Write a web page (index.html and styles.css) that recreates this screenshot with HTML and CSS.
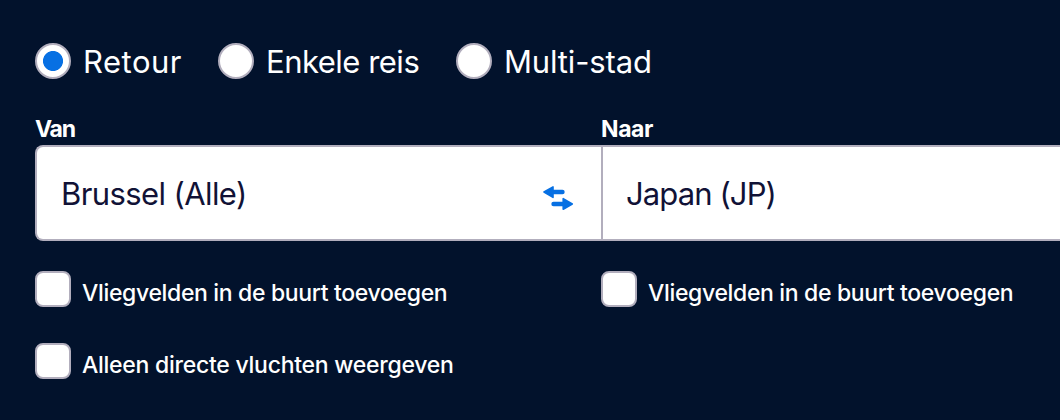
FILE: index.html
```html
<!DOCTYPE html>
<html lang="nl">
<head>
  <meta charset="UTF-8">
  <title>Vluchten zoeken</title>
  <meta name="viewport" content="width=device-width, initial-scale=1.0">
  <link rel="stylesheet" href="styles.css">
</head>
<body>

<form class="search">

  <!-- REISTYPE -->
  <div class="trip-types">
    <label class="trip trip-return"><input type="radio" name="trip" checked><span>Retour</span></label>
    <label class="trip trip-single"><input type="radio" name="trip"><span>Enkele reis</span></label>
    <label class="trip trip-multi"><input type="radio" name="trip"><span>Multi-stad</span></label>
  </div>

  <!-- VAN / NAAR -->
  <div class="columns labels">
    <span class="label-from">Van</span>
    <span class="label-to">Naar</span>
  </div>
  <div class="columns fields">
    <div class="field">
      <span class="value-from">Brussel (Alle)</span>
      <svg class="swap" width="32" height="26" viewBox="0 0 32 26">
        <path d="M1 8 10 2.9V13.4Z"/>
        <path d="M8 8H19.5"/>
        <path d="M29.3 20 20.2 14.7V25.2Z"/>
        <path d="M22 20H10.5"/>
      </svg>
    </div>
    <div class="field">
      <span class="value-to">Japan (JP)</span>
    </div>
  </div>

  <!-- OPTIES -->
  <div class="columns options">
    <label class="option nearby"><input type="checkbox"><span>Vliegvelden in de buurt toevoegen</span></label>
    <label class="option nearby"><input type="checkbox"><span>Vliegvelden in de buurt toevoegen</span></label>
    <label class="option direct"><input type="checkbox"><span>Alleen directe vluchten weergeven</span></label>
  </div>

</form>

</body>
</html>
```

FILE: styles.css
```css
* {
  box-sizing: border-box;
}

body {
  margin: 0;
  height: 420px;
  background-color: #02122c;
  color: #fff;
  font-family: Inter, "Liberation Sans", sans-serif;
}

.search {
  padding: 43px 0 0 35px;
}

.columns {
  display: grid;
  grid-template-columns: 566px 1fr;
}

input {
  appearance: none;
  flex: none;
  width: 36px;
  height: 36px;
  margin: 0;
  background-color: #fff;
  border: 2px solid #b2aebd;
}

/* REISTYPE */
.trip-types {
  display: flex;
}

.trip {
  display: flex;
  align-items: center;
  gap: 12px;
  height: 36px;
  font-size: 31px;
  white-space: nowrap;
}

.trip-return {
  width: 183px;
  letter-spacing: 0.5px;
}

.trip-single {
  width: 238px;
  letter-spacing: -0.5px;
}

.trip-multi {
  letter-spacing: -0.15px;
}

.trip input {
  border-radius: 50%;
}

.trip input:checked {
  background: radial-gradient(circle, #0770e3 9.6px, #fff 10.4px);
}

/* VELDEN */
.labels {
  margin-top: 36px;
  height: 30px;
  line-height: 28px;
  font-size: 23px;
  font-weight: 700;
}

.label-from {
  letter-spacing: -1.2px;
}

.label-to {
  letter-spacing: -0.4px;
}

.fields {
  height: 96px;
  background-color: #fff;
  border: 2px solid #b2aebd;
  border-right: none;
  border-radius: 8px 0 0 8px;
}

.field {
  display: flex;
  align-items: center;
  justify-content: space-between;
  padding: 0 28px 0 24px;
  font-size: 31px;
  color: #111236;
}

.field + .field {
  border-left: 2px solid #b2aebd;
  margin-left: -2px;
  padding-left: 23px;
}

.value-from {
  letter-spacing: -0.6px;
}

.value-to {
  letter-spacing: -0.9px;
}

.swap {
  margin-top: 8px;
  fill: #0770e3;
  stroke: #0770e3;
  stroke-width: 1.6;
  stroke-linejoin: round;
  stroke-linecap: round;
}

.swap path:nth-child(even) {
  stroke-width: 4.4;
}

/* OPTIES */
.options {
  margin-top: 30px;
  row-gap: 36px;
}

.option {
  display: flex;
  align-items: center;
  gap: 11px;
  height: 36px;
  font-size: 23px;
  font-weight: 500;
  letter-spacing: -0.34px;
  white-space: nowrap;
}

.direct {
  letter-spacing: -0.26px;
}

.option input {
  border-radius: 8px;
}

.option span {
  padding-top: 7px;
}
```
